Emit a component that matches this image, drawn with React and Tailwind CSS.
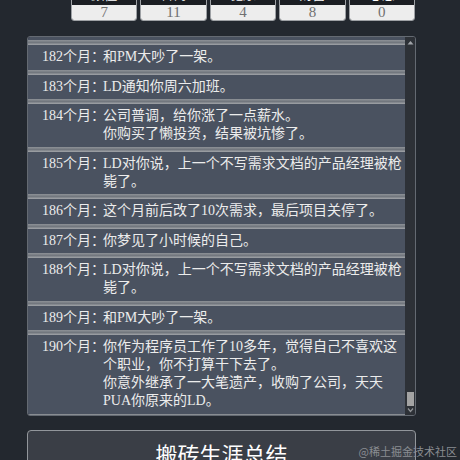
import React from 'react';

const STATS = [
  { label: '颜值', value: 7 },
  { label: '智商', value: 11 },
  { label: '健康', value: 4 },
  { label: '财富', value: 8 },
  { label: '心态', value: 0 },
];

const EVENTS = [
  { month: 182, lines: ['和PM大吵了一架。'] },
  { month: 183, lines: ['LD通知你周六加班。'] },
  { month: 184, lines: ['公司普调，给你涨了一点薪水。', '你购买了懒投资，结果被坑惨了。'] },
  { month: 185, lines: ['LD对你说，上一个不写需求文档的产品经理被枪毙了。'] },
  { month: 186, lines: ['这个月前后改了10次需求，最后项目关停了。'] },
  { month: 187, lines: ['你梦见了小时候的自己。'] },
  { month: 188, lines: ['LD对你说，上一个不写需求文档的产品经理被枪毙了。'] },
  { month: 189, lines: ['和PM大吵了一架。'] },
  {
    month: 190,
    lines: [
      '你作为程序员工作了10多年，觉得自己不喜欢这个职业，你不打算干下去了。',
      '你意外继承了一大笔遗产，收购了公司，天天PUA你原来的LD。',
    ],
  },
];

const serif = "font-['Liberation_Serif','Noto_Sans_CJK_SC',serif]";

function Divider() {
  return <div className="h-[5px] bg-[linear-gradient(to_bottom,#8e9297,#72777e_50%,#a2a5a9)]" />;
}

function EventRow({ month, lines }) {
  return (
    <div>
      <Divider />
      <div className="flex bg-[#4a5260] pl-[14px] pr-[1px] pt-[3px] pb-[3.5px] text-[14px] leading-[18px] text-[#ececec]">
        <span className="w-[61px] shrink-0 whitespace-nowrap">{month}个月：</span>
        <div className="flex-1 min-w-0">
          {lines.map((line, i) => (
            <p key={i}>{line}</p>
          ))}
        </div>
      </div>
    </div>
  );
}

function Scrollbar() {
  return (
    <div className="w-[10px] shrink-0 bg-[#2d3137] flex flex-col items-center justify-between py-[2px]">
      <svg width="7" height="5" viewBox="0 0 7 5" className="mt-[1px]">
        <polygon points="0.5,4.5 3.5,1 6.5,4.5" fill="#a2a5aa" />
      </svg>
      <div className="flex flex-col items-center gap-[1px]">
        <div className="w-[7px] h-[14px] bg-[#a3a3a3]" />
        <svg width="7" height="6" viewBox="0 0 7 6">
          <polyline points="1,1.5 3.5,4.5 6,1.5" fill="none" stroke="#8f9296" strokeWidth="1.2" />
        </svg>
      </div>
    </div>
  );
}

export default function App() {
  return (
    <div className="relative h-[460px] w-[460px] overflow-hidden bg-[#23282f]">
      <div className={`ml-[71px] w-[344px] grid grid-cols-5 gap-[3px] -mt-[16px] ${serif}`}>
        {STATS.map((s) => (
          <div key={s.label} className="border border-[#9ea1a5] rounded-b-[3px] overflow-hidden">
            <div className="h-[20px] bg-[#1b1e23] text-center text-[13px] leading-[18px] text-white font-['Noto_Sans_CJK_SC',sans-serif]">
              {s.label}
            </div>
            <div className="h-[15px] bg-[#ededed] text-center text-[15px] leading-[15px] text-[#707070]">
              {s.value}
            </div>
          </div>
        ))}
      </div>

      <div className="ml-[27px] mt-[15px] w-[389px] h-[380px] border border-[#646a72] rounded-[3px] flex overflow-hidden">
        <div className={`flex-1 overflow-hidden ${serif}`}>
          <div className="h-[3px] bg-[#4a5260]" />
          {EVENTS.map((e) => (
            <EventRow key={e.month} month={e.month} lines={e.lines} />
          ))}
          <Divider />
        </div>
        <Scrollbar />
      </div>

      <button className="mt-[14px] ml-[27px] w-[389px] h-[60px] border border-[#92969b] rounded-[4px] bg-[#3a3e46] text-white text-[22px] leading-[28px] pt-[8px] flex justify-center items-start font-['Noto_Sans_CJK_SC',sans-serif]">
        搬砖生涯总结
      </button>

      <span className="absolute right-[3px] top-[444px] text-[11px] leading-[14px] text-[#8a8d92] font-['Noto_Sans_CJK_SC',sans-serif]">
        @稀土掘金技术社区
      </span>
    </div>
  );
}
